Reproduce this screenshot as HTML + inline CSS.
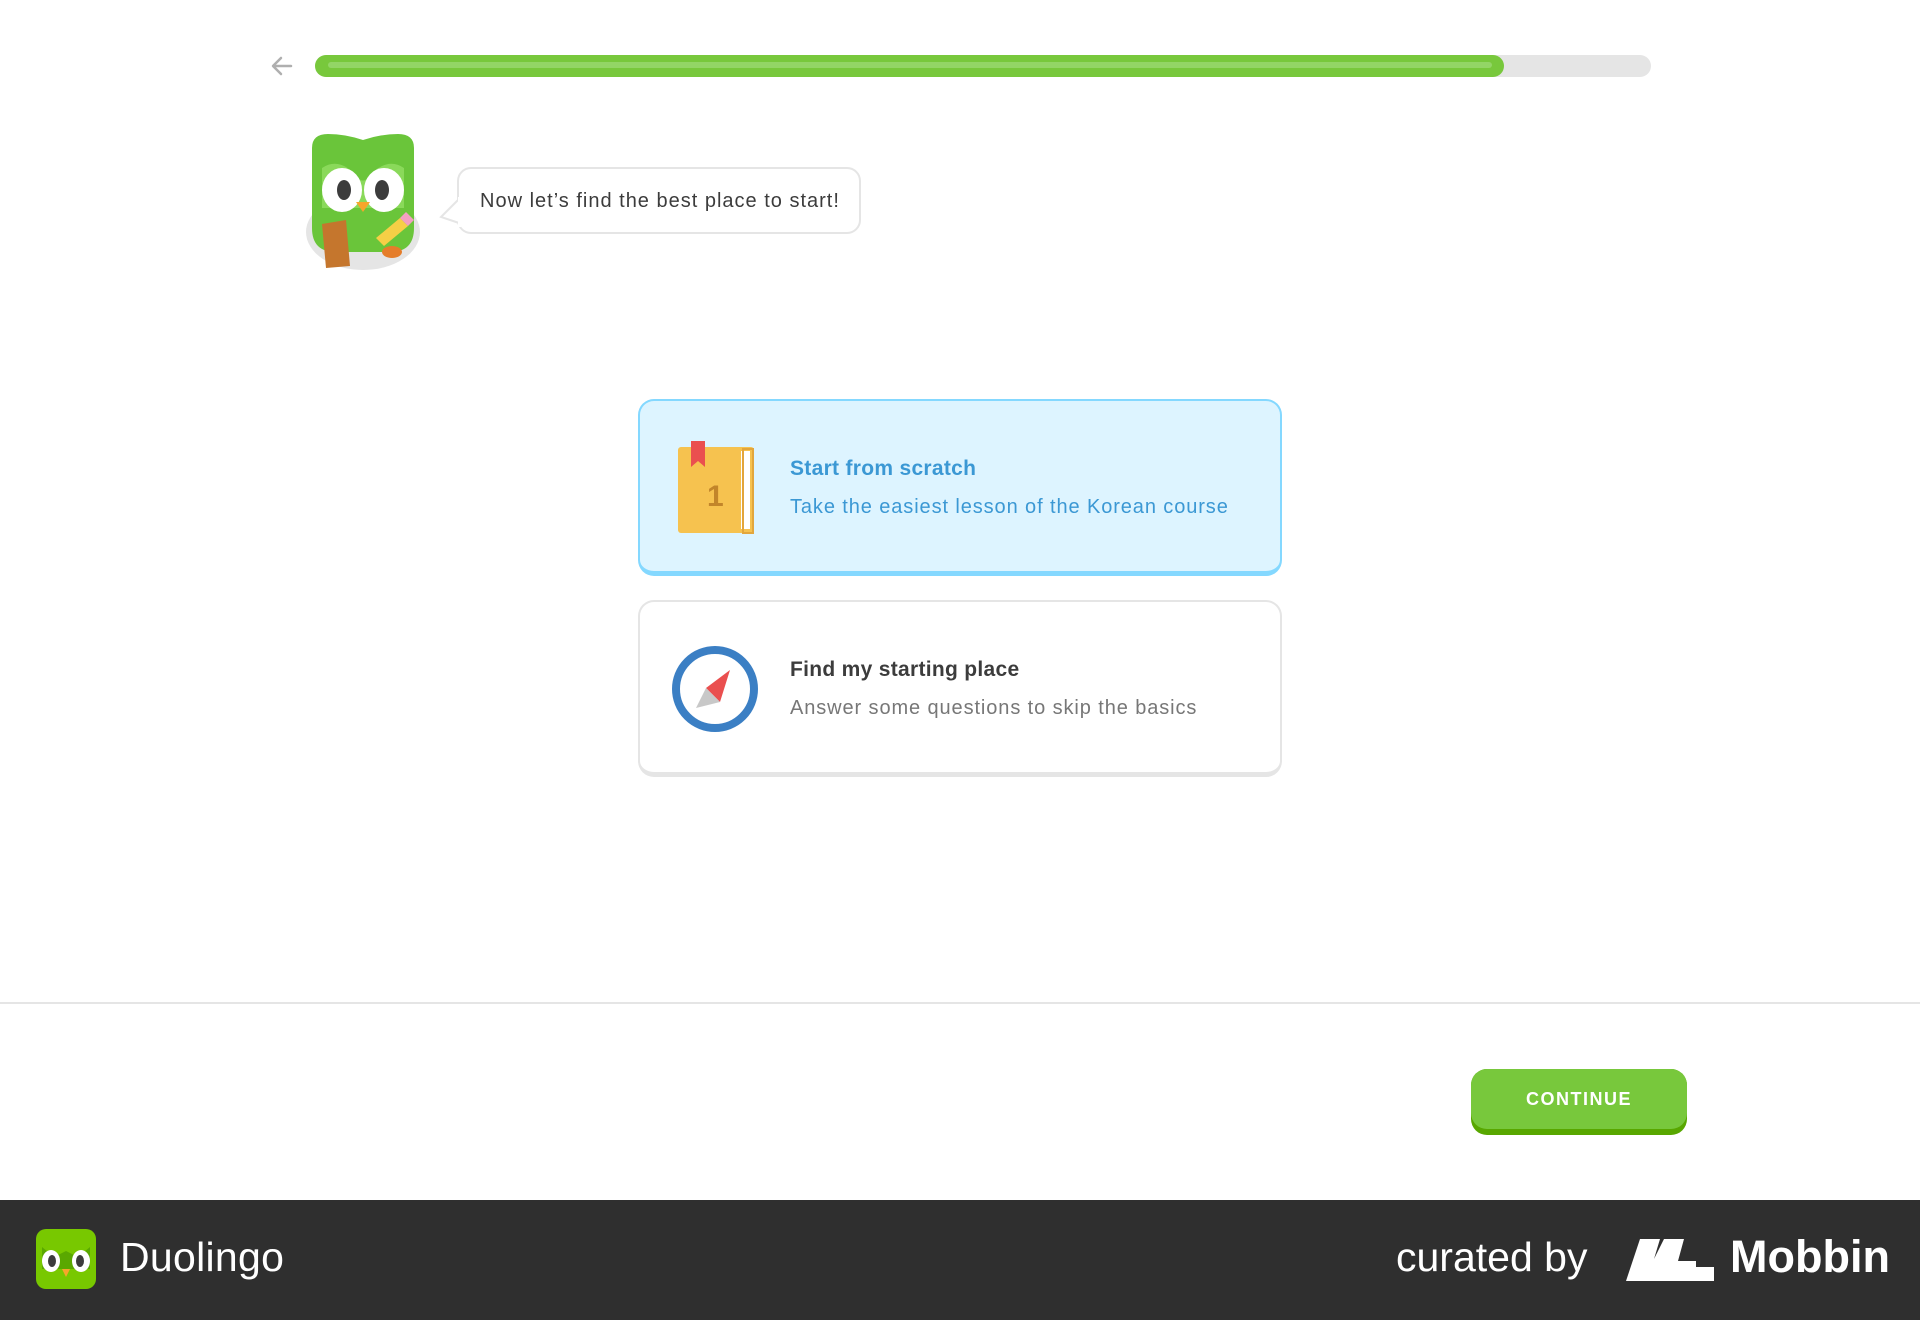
<!DOCTYPE html>
<html><head><meta charset="utf-8"><style>
*{margin:0;padding:0;box-sizing:border-box}
body{width:1920px;height:1320px;position:relative;background:#fff;font-family:"Liberation Sans",sans-serif;overflow:hidden}
.abs{position:absolute}
.card{position:absolute;left:638px;width:644px;height:177px;border-radius:16px}
.t1{position:absolute;left:150px;font-weight:bold;font-size:21px;letter-spacing:0.3px}
.t2{position:absolute;left:150px;font-size:20px;letter-spacing:0.9px}
</style></head><body>
<svg class="abs" style="left:270px;top:54px" width="24" height="24" viewBox="0 0 24 24"><path d="M21 12H4M11 4l-8 8 8 8" fill="none" stroke="#afafaf" stroke-width="2.5" stroke-linecap="round" stroke-linejoin="round"/></svg>
<div class="abs" style="left:315px;top:55px;width:1336px;height:22px;border-radius:11px;background:#e5e5e5"></div>
<div class="abs" style="left:315px;top:55px;width:1189px;height:22px;border-radius:11px;background:#78c83c"></div>
<div class="abs" style="left:328px;top:62px;width:1164px;height:6px;border-radius:3px;background:#93d566"></div>

<svg class="abs" style="left:300px;top:128px" width="126" height="146" viewBox="0 0 126 146">
<ellipse cx="63" cy="104" rx="57" ry="38" fill="#e5e5e5"/>
<path d="M12 20 Q12 6 28 6 Q45 6 63 12 Q81 6 98 6 Q114 6 114 20 L114 100 Q114 124 90 124 L36 124 Q12 124 12 100Z" fill="#6ac53a"/>
<path d="M22 40 Q40 28 58 50 Q63 55 68 50 Q86 28 104 40 L104 80 L22 80Z" fill="#8ad95a"/>
<ellipse cx="42" cy="62" rx="20" ry="22" fill="#fff"/><ellipse cx="84" cy="62" rx="20" ry="22" fill="#fff"/>
<ellipse cx="44" cy="62" rx="7" ry="10" fill="#3c3c3c"/><ellipse cx="82" cy="62" rx="7" ry="10" fill="#3c3c3c"/>
<path d="M56 74 L70 74 L63 84Z" fill="#f7a52b"/>
<path d="M22 96 L46 92 L50 138 L26 140Z" fill="#c5762d"/>
<path d="M76 110 L100 90 L108 98 L84 118Z" fill="#f6cf46"/>
<path d="M100 90 L106 84 L114 92 L108 98Z" fill="#f2a0c0"/>
<ellipse cx="92" cy="124" rx="10" ry="6" fill="#e57d2a"/>
</svg>

<div class="abs" style="left:457px;top:167px;width:404px;height:67px;border:2px solid #e5e5e5;border-radius:14px;background:#fff"></div>
<svg class="abs" style="left:437px;top:197px" width="24" height="30" viewBox="0 0 24 30"><path d="M22 2 L4 20 L22 26" fill="#fff" stroke="#e5e5e5" stroke-width="2"/><rect x="21" y="0" width="4" height="30" fill="#fff"/></svg>
<div class="abs" style="left:480px;top:190px;font-size:20px;color:#3c3c3c;letter-spacing:1px">Now let’s find the best place to start!</div>

<div class="card" style="top:399px;background:#ddf4ff;border:2px solid #84d8ff;border-bottom-width:5px">
<svg class="abs" style="left:37px;top:40px" width="78" height="94" viewBox="0 0 78 94">
<rect x="1" y="6" width="76" height="86" rx="3" fill="#f6c24f"/>
<rect x="64" y="10" width="9" height="78" fill="#fff"/>
<rect x="66" y="8" width="10" height="84" fill="none" stroke="#e3a63c" stroke-width="2"/>
<path d="M14 0 H28 V26 L21 20 L14 26Z" fill="#ea4f4f"/>
<text x="30" y="65" font-size="30" font-weight="bold" fill="#c2852a" font-family="Liberation Sans">1</text>
</svg>
<div class="t1" style="top:56px;color:#3b98d4">Start from scratch</div>
<div class="t2" style="top:95px;color:#3b98d4">Take the easiest lesson of the Korean course</div>
</div>

<div class="card" style="top:600px;background:#fff;border:2px solid #e5e5e5;border-bottom-width:5px">
<svg class="abs" style="left:30px;top:42px" width="90" height="90" viewBox="0 0 90 90">
<circle cx="45" cy="45" r="39" fill="#fff" stroke="#3b7fc4" stroke-width="8"/>
<path d="M60 26 L50 58 L36 44Z" fill="#ea4f4f"/>
<path d="M36 44 L50 58 L26 64Z" fill="#c8c8c8"/>
</svg>
<div class="t1" style="top:56px;color:#3c3c3c">Find my starting place</div>
<div class="t2" style="top:95px;color:#777">Answer some questions to skip the basics</div>
</div>

<div class="abs" style="left:0;top:1002px;width:1920px;height:2px;background:#e5e5e5"></div>
<div class="abs" style="left:1471px;top:1069px;width:216px;height:66px;border-radius:16px;background:#58a700"></div>
<div class="abs" style="left:1471px;top:1069px;width:216px;height:60px;border-radius:16px;background:#78c83c;color:#fff;font-weight:bold;font-size:18px;letter-spacing:1.5px;text-align:center;line-height:60px">CONTINUE</div>

<div class="abs" style="left:0;top:1200px;width:1920px;height:120px;background:#2f2f2f"></div>
<svg class="abs" style="left:36px;top:1229px" width="60" height="60" viewBox="0 0 60 60">
<rect width="60" height="60" rx="10" fill="#78c800"/>
<path d="M6 18 L18 28 L30 22 L42 28 L54 18 L54 40 L6 40Z" fill="#5aa800"/>
<ellipse cx="15" cy="32" rx="9" ry="11" fill="#fff"/><ellipse cx="45" cy="32" rx="9" ry="11" fill="#fff"/>
<ellipse cx="16" cy="32" rx="4" ry="6" fill="#3c3c3c"/><ellipse cx="44" cy="32" rx="4" ry="6" fill="#3c3c3c"/>
<path d="M26 40 H34 L30 48Z" fill="#f7a52b"/>
</svg>
<div class="abs" style="left:120px;top:1234px;font-size:41px;color:#fff;letter-spacing:0.3px">Duolingo</div>
<div class="abs" style="left:1396px;top:1234px;font-size:41px;color:#fff;letter-spacing:0px">curated by</div>
<svg class="abs" style="left:1626px;top:1239px" width="88" height="42" viewBox="0 0 88 42"><path d="M0 42 L14 0 L34 0 L28 20 L38 0 L58 0 L52 22 L70 22 L70 28 L88 28 L88 42 Z" fill="#fff"/></svg>
<div class="abs" style="left:1730px;top:1231px;font-size:45px;font-weight:bold;color:#fff">Mobbin</div>
</body></html>
